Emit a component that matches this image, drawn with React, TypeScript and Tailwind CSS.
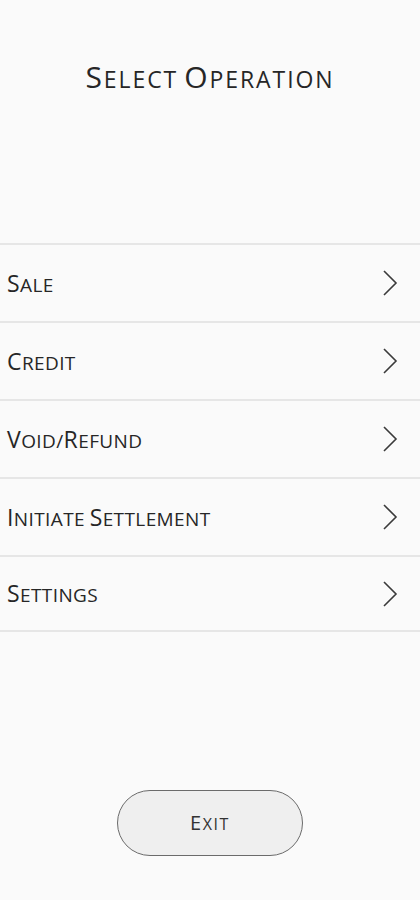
const items = ["Sale", "Credit", "Void/Refund", "Initiate Settlement", "Settings"];

// draws words as small caps: first letter of each word large, rest smaller
const Caps = ({ text, big, small }: { text: string; big: string; small: string }) => (
  <span className="uppercase">
    {text.split(" ").map((word, i) => {
      const parts = word.split("/");
      return (
        <span key={i}>
          {i > 0 && " "}
          {parts.map((p, j) => (
            <span key={j}>
              {j > 0 && <span className={small}>/</span>}
              <span className={big}>{p[0]}</span>
              <span className={small}>{p.slice(1)}</span>
            </span>
          ))}
        </span>
      );
    })}
  </span>
);

const Chevron = () => (
  <svg width="16" height="26" viewBox="0 0 16 26" fill="none">
    <polyline points="2,1 14,13 2,25" stroke="#3a3a3a" strokeWidth="1.6" />
  </svg>
);

export default function App() {
  return (
    <div
      className="min-h-[900px] w-full bg-[#fafafa] text-[#262626] flex flex-col"
      style={{ fontFamily: "'Open Sans', 'Liberation Sans', sans-serif" }}
    >
      <div className="h-[154px] flex items-center justify-center">
        <h1 className="tracking-[0.12em] leading-none">
          <Caps text="Select Operation" big="text-[30px]" small="text-[23px]" />
        </h1>
      </div>

      <div className="mt-[89px] border-b-2 border-[#e6e6e6]">
        {items.map((item, i) => (
          <div
            key={item}
            className={
              "border-t-2 border-[#e6e6e6] flex items-center justify-between pl-[7px] pr-[22px] " +
              (i === items.length - 1 ? "h-[75px]" : "h-[78px]")
            }
          >
            <span className="tracking-[0.025em] leading-none">
              <Caps text={item} big="text-[23px]" small="text-[19px]" />
            </span>
            <Chevron />
          </div>
        ))}
      </div>

      <div className="mt-[158px] flex justify-center">
        <button className="w-[186px] h-[66px] rounded-full border border-[#6b6b6b] bg-[#efefef] text-[#333] tracking-[0.1em] leading-none">
          <Caps text="Exit" big="text-[20px]" small="text-[16px]" />
        </button>
      </div>
    </div>
  );
}
